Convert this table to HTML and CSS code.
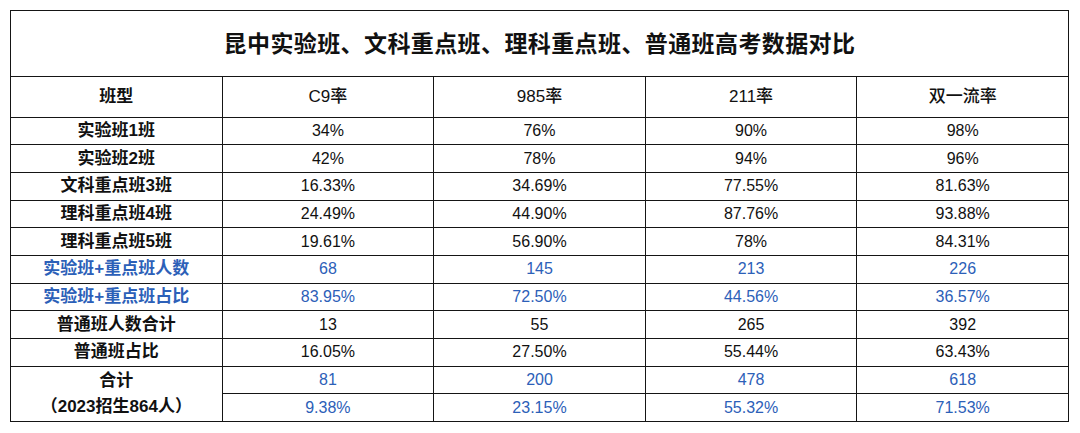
FILE: index.html
```html
<!DOCTYPE html>
<html lang="zh">
<head>
<meta charset="utf-8">
<link rel="stylesheet" href="styles.css">
</head>
<body>
<table class="grid">
  <colgroup><col><col><col><col><col></colgroup>
  <tr class="title-row"><td colspan="5">昆中实验班、文科重点班、理科重点班、普通班高考数据对比</td></tr>
  <tr class="head-row"><td class="label">班型</td><td>C9率</td><td>985率</td><td>211率</td><td>双一流率</td></tr>
  <tr class="row"><td class="label">实验班1班</td><td>34%</td><td>76%</td><td>90%</td><td>98%</td></tr>
  <tr class="row"><td class="label">实验班2班</td><td>42%</td><td>78%</td><td>94%</td><td>96%</td></tr>
  <tr class="row"><td class="label">文科重点班3班</td><td>16.33%</td><td>34.69%</td><td>77.55%</td><td>81.63%</td></tr>
  <tr class="row"><td class="label">理科重点班4班</td><td>24.49%</td><td>44.90%</td><td>87.76%</td><td>93.88%</td></tr>
  <tr class="row"><td class="label">理科重点班5班</td><td>19.61%</td><td>56.90%</td><td>78%</td><td>84.31%</td></tr>
  <tr class="row blue"><td class="label">实验班+重点班人数</td><td>68</td><td>145</td><td>213</td><td>226</td></tr>
  <tr class="row blue"><td class="label">实验班+重点班占比</td><td>83.95%</td><td>72.50%</td><td>44.56%</td><td>36.57%</td></tr>
  <tr class="row"><td class="label">普通班人数合计</td><td>13</td><td>55</td><td>265</td><td>392</td></tr>
  <tr class="row"><td class="label">普通班占比</td><td>16.05%</td><td>27.50%</td><td>55.44%</td><td>63.43%</td></tr>
  <tr class="row"><td class="label total" rowspan="2"><span class="tline">合计</span><span class="tline">（2023招生864人）</span></td><td class="bv">81</td><td class="bv">200</td><td class="bv">478</td><td class="bv">618</td></tr>
  <tr class="row"><td class="bv">9.38%</td><td class="bv">23.15%</td><td class="bv">55.32%</td><td class="bv">71.53%</td></tr>
</table>
</body>
</html>
```

FILE: styles.css
```css
html, body {
  margin: 0;
  background: #ffffff;
}
body {
  padding: 10px 0 0 10px;
  font-family: "Liberation Sans", "Noto Sans CJK SC", sans-serif;
  color: #111111;
}
.grid {
  width: 1059px;
  border-collapse: collapse;
  table-layout: fixed;
}
.grid td {
  border: 1px solid #151515;
  text-align: center;
  vertical-align: middle;
  padding: 0;
  line-height: 14px;
}
.title-row td {
  height: 65px;
  font-size: 23px;
  font-weight: 600;
  letter-spacing: 0.4px;
  line-height: 24px;
}
.head-row td {
  height: 39.5px;
  font-size: 17px;
  font-weight: 500;
}
.row td {
  height: 26.7px;
  font-size: 16px;
}
.grid td.label {
  font-size: 17px;
  font-weight: 700;
}
.blue td, .row td.bv {
  color: #2c60b8;
}
.row td.total {
  color: #111111;
}
.tline {
  display: block;
  line-height: 26px;
}
```
